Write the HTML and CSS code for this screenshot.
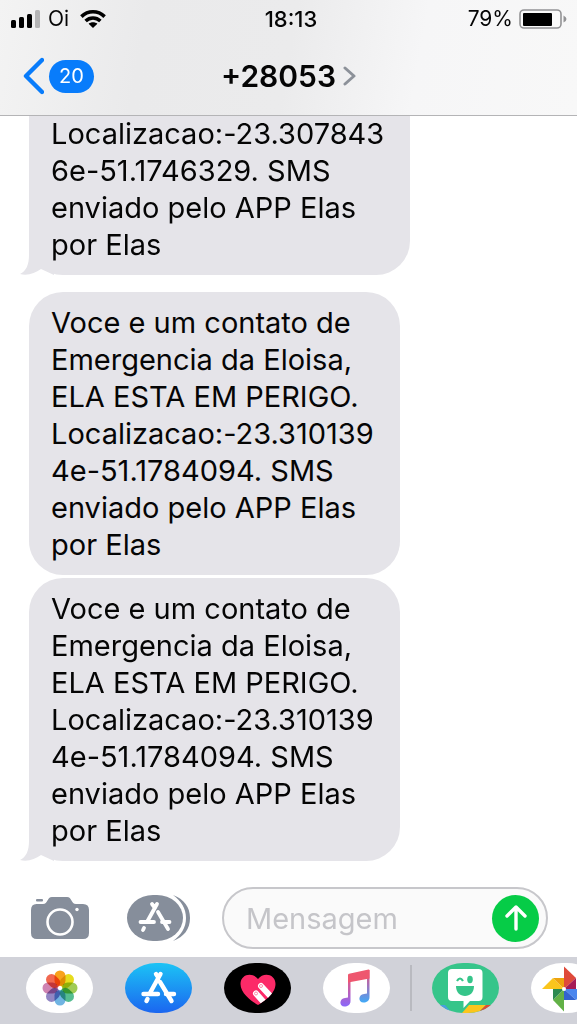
FILE: index.html
```html
<!DOCTYPE html>
<html lang="pt-BR">
<head>
  <meta charset="UTF-8" />
  <meta name="viewport" content="width=device-width, initial-scale=1.0" />
  <title>+28053</title>
  <link rel="stylesheet" href="styles.css">
</head>
<body>
  <div class="phone">
    <header class="top">
      <div class="status">
        <div class="status-left">
          <svg class="signal" width="30" height="18" viewBox="0 0 30 18">
            <rect x="0" y="10" width="5" height="8" rx="1.5"/>
            <rect x="8" y="7" width="5" height="11" rx="1.5"/>
            <rect x="16" y="4" width="5" height="14" rx="1.5"/>
            <rect x="24" y="0" width="5" height="18" rx="1.5" fill="#b5b5b6"/>
          </svg>
          <span>Oi</span>
          <svg class="wifi" width="26" height="18" viewBox="0 0 26 18" fill="none" stroke="#000" stroke-width="3.6">
            <path d="M1.4 6.6 C8 .2 18 .2 24.600 6.600"/>
            <path d="M5.600 11 C10 7 16 7 20.400 11"/>
            <path d="M13 18 L8.600 13.800 C11 11.800 15 11.800 17.400 13.800Z" fill="#000" stroke="none"/>
          </svg>
        </div>
        <time class="clock">18:13</time>
        <div class="status-right">
          <span>79%</span>
          <svg width="48" height="20" viewBox="0 0 48 20">
            <rect x="1" y="1" width="41" height="18" rx="4" fill="#fafafa" stroke="#939395" stroke-width="1.6"/>
            <rect x="4" y="4" width="29" height="13" rx="1"/>
            <path d="M44.500 6.500 Q47.500 8 47.500 10 T44.500 13.500Z" fill="#939395"/>
          </svg>
        </div>
      </div>
      <nav class="nav">
        <a href="#" class="back" aria-label="Voltar">
          <svg width="22" height="38" viewBox="0 0 22 38" fill="none" stroke="#087cfb" stroke-width="4.4" stroke-linecap="round" stroke-linejoin="round">
            <path d="M20 3 L4 19 L20 35"/>
          </svg>
          <span class="badge">20</span>
        </a>
        <a href="#" class="contact">
          <span>+28053</span>
          <svg width="13" height="20" viewBox="0 0 13 20" fill="none" stroke="#8c9199" stroke-width="3" stroke-linecap="round" stroke-linejoin="round">
            <path d="M2 2 L11 10 L2 18"/>
          </svg>
        </a>
      </nav>
    </header>

    <main class="thread">
      <p class="bubble tail scrolled">Localizacao:-23.307843<br>6e-51.1746329. SMS<br>enviado pelo APP Elas<br>por Elas</p>
      <p class="bubble">Voce e um contato de<br>Emergencia da Eloisa,<br>ELA ESTA EM PERIGO.<br>Localizacao:-23.310139<br>4e-51.1784094. SMS<br>enviado pelo APP Elas<br>por Elas</p>
      <p class="bubble tail">Voce e um contato de<br>Emergencia da Eloisa,<br>ELA ESTA EM PERIGO.<br>Localizacao:-23.310139<br>4e-51.1784094. SMS<br>enviado pelo APP Elas<br>por Elas</p>
    </main>

    <form class="composer">
      <button type="button" class="icon-btn" aria-label="Câmera">
        <svg width="58" height="44" viewBox="0 0 58 44">
          <path fill="#868e9b" d="M5.500 8 H12 C17 8 16 1 21 1 H36 C41 1 40 8 45 8 H52 Q58 8 58 14 V37 Q58 43 52 43 H6 Q0 43 0 37 V14 Q0 8 5.500 8Z"/>
          <rect x="5" y="3" width="7" height="2.500" rx="1" fill="#868e9b"/>
          <circle cx="29" cy="26" r="12.500" fill="none" stroke="#fff" stroke-width="2.600"/>
          <circle cx="46" cy="13.500" r="1.700" fill="#fff"/>
        </svg>
      </button>
      <button type="button" class="icon-btn" aria-label="Aplicativos">
        <svg width="63" height="48" viewBox="0 0 63 48">
          <path fill="#868e9b" d="M46 1 C57 5 63 13 63 24 C63 35 57 43 46 47 C54 41 59 34 59 24 C59 14 54 7 46 1Z"/>
          <rect x="0" y="1" width="56" height="46" rx="26" ry="23" fill="#868e9b"/>
          <g fill="none" stroke="#fff" stroke-width="3.800" stroke-linecap="round">
            <path d="M30 10 L20 28 M25 10 L28 14 M31 18 L41 35 M13.500 28 H27 M35 28 H42.500 M17 34 L16 36"/>
          </g>
        </svg>
      </button>
      <div class="field">
        <input type="text" class="message" placeholder="Mensagem" aria-label="Mensagem">
        <button type="submit" class="send" aria-label="Enviar">
          <svg width="24" height="28" viewBox="0 0 24 28" fill="none" stroke="#fff" stroke-width="3.400" stroke-linecap="round" stroke-linejoin="round">
            <path d="M12 25 V3 M3 12 L12 3 L21 12"/>
          </svg>
        </button>
      </div>
    </form>

    <nav class="drawer">
      <a href="#" class="app white" aria-label="Fotos">
        <svg width="67" height="50" viewBox="0 0 67 50">
          <g class="petals" transform="translate(34 25)">
            <rect x="-5.500" y="-17.500" width="11" height="15.500" rx="5.500" fill="#f8a21c"/>
            <rect x="-5.500" y="-17.500" width="11" height="15.500" rx="5.500" fill="#e6dc1e" transform="rotate(45)"/>
            <rect x="-5.500" y="-17.500" width="11" height="15.500" rx="5.500" fill="#a0cb55" transform="rotate(90)"/>
            <rect x="-5.500" y="-17.500" width="11" height="15.500" rx="5.500" fill="#55bd91" transform="rotate(135)"/>
            <rect x="-5.500" y="-17.500" width="11" height="15.500" rx="5.500" fill="#70b4e2" transform="rotate(180)"/>
            <rect x="-5.500" y="-17.500" width="11" height="15.500" rx="5.500" fill="#9286c4" transform="rotate(225)"/>
            <rect x="-5.500" y="-17.500" width="11" height="15.500" rx="5.500" fill="#cf84b2" transform="rotate(270)"/>
            <rect x="-5.500" y="-17.500" width="11" height="15.500" rx="5.500" fill="#f16850" transform="rotate(315)"/>
          </g>
        </svg>
      </a>
      <a href="#" class="app store" aria-label="App Store">
        <svg width="67" height="50" viewBox="0 0 67 50" fill="none" stroke="#fff" stroke-width="4.400" stroke-linecap="round">
          <path d="M35.500 11 L25 30 M31 11 L33 14 M35 19 L46.500 38 M18.500 31 H33 M41 31 H49 M22.500 36 L21.500 38"/>
        </svg>
      </a>
      <a href="#" class="app black" aria-label="Digital Touch">
        <svg width="67" height="50" viewBox="0 0 67 50">
          <clipPath id="heart">
            <path d="M34 42 C29 39 16.500 31 16.500 21 C16.500 11 28.500 8.500 34 16 C39.500 8.500 51.500 11 51.500 21 C51.500 31 39 39 34 42Z"/>
          </clipPath>
          <g clip-path="url(#heart)">
            <rect width="67" height="50" fill="#fc2a68"/>
            <g stroke="#fff" stroke-width="6" stroke-linecap="round">
              <path d="M37 23 L50 37 M32 30.500 L44 44"/>
            </g>
            <g fill="none" stroke="#fc8aa9" stroke-width="1">
              <circle cx="37" cy="23" r="1.500"/>
              <circle cx="32" cy="30.500" r="1.500"/>
            </g>
          </g>
        </svg>
      </a>
      <a href="#" class="app white" aria-label="Música">
        <svg width="67" height="50" viewBox="0 0 67 50">
          <defs>
            <linearGradient id="stemL" x1="0" y1="0" x2="0" y2="1">
              <stop offset="0" stop-color="#f2566f"/>
              <stop offset="1" stop-color="#8a68fa"/>
            </linearGradient>
            <linearGradient id="stemR" x1="0" y1="0" x2="0" y2="1">
              <stop offset="0" stop-color="#f0566e"/>
              <stop offset=".45" stop-color="#a66fb8"/>
              <stop offset="1" stop-color="#3faaf8"/>
            </linearGradient>
          </defs>
          <path fill="url(#stemL)" d="M25 12 H27.500 V38 C27.500 42 24.500 43.500 21.500 43.500 C16 43.500 16 35.500 22 35 L25 34.500Z"/>
          <path fill="url(#stemR)" d="M44 7 H46.500 V34 C46.500 38 43.500 39.500 40.500 39.500 C35 39.500 35 31.500 41 31 L44 30.500Z"/>
          <path fill="#ee576f" d="M25 12 Q25 11 26 10.800 L45.500 6.500 Q46.500 6.400 46.500 7.500 V15.500 L25 19.500Z"/>
        </svg>
      </a>
      <span class="divider"></span>
      <a href="#" class="app bitmoji" aria-label="Bitmoji">
        <svg width="67" height="50" viewBox="0 0 67 50">
          <path fill="#4a9fe0" d="M0 42 H13 L20 50 H0Z"/>
          <path fill="#fcc51c" d="M30 50 L37 42 H54 L46 50Z"/>
          <path fill="#df4a35" d="M46 50 L54 42 H62 V50Z"/>
          <path fill="#fff" d="M20 6 H46.500 Q50.500 6 50.500 10 V34 Q50.500 38 46.500 38 H38 L31.500 45 V38 H20 Q16 38 16 34 V10 Q16 6 20 6Z"/>
          <path d="M25 18 Q28 13 31 18" fill="none" stroke="#36c58a" stroke-width="2.200"/>
          <ellipse cx="38" cy="16.500" rx="2.800" ry="3.700" fill="#36c58a"/>
          <path fill="#36c58a" d="M24 23 H42 C42 29.500 38 33 33 33 S24 29.500 24 23Z"/>
        </svg>
      </a>
      <a href="#" class="app white" aria-label="Google Fotos">
        <svg width="67" height="50" viewBox="0 0 67 50">
          <path fill="#df4a3a" d="M33 26 V3.500 L45 15Z"/>
          <path fill="#a51b55" d="M33 26 L45 15 V26Z"/>
          <path fill="#fac51c" d="M33 26 H11 L22 15Z"/>
          <path fill="#eda30f" d="M33 26 L22 15 H33Z"/>
          <path fill="#62b146" d="M33 26 V48.500 L22 37Z"/>
          <path fill="#2c8a50" d="M33 26 L22 37 V26Z"/>
          <path fill="#4a86ee" d="M33 26 H56 L45 37Z"/>
          <path fill="#3264cf" d="M33 26 L45 37 H33Z"/>
          <circle cx="33" cy="26" r="2" fill="#fff"/>
        </svg>
      </a>
    </nav>
  </div>
</body>
</html>
```

FILE: styles.css
```css
body {
  margin: 0;
  font-family: Inter, "Liberation Sans", sans-serif;
  color: #050505;
  background: #fff;
}

a {
  color: inherit;
  text-decoration: none;
}

button {
  border: none;
  padding: 0;
  background: none;
  cursor: pointer;
}

svg {
  display: block;
  flex: none;
}

.phone {
  display: flex;
  flex-direction: column;
  height: 100vh;
  overflow: hidden;
}

/* status bar and title */
.top {
  flex: none;
  background: linear-gradient(100deg, #f3f3f3 0%, #eaeaeb 25%, #ebebec 50%, #f6f6f7 72%, #f8f8f8 100%);
  border-bottom: 1px solid #b4b4b6;
}

.status {
  display: grid;
  grid-template-columns: 1fr auto 1fr;
  align-items: center;
  height: 37px;
  padding: 0 10px 0 11px;
  font-size: 21px;
}

.status-left,
.status-right {
  display: flex;
  align-items: center;
}

.status-left {
  gap: 7px;
}

.wifi {
  margin-left: 4px;
}

.status-right {
  justify-content: flex-end;
  gap: 6px;
}

.clock {
  font-size: 22px;
  font-weight: 500;
  padding-left: 4px;
}

.nav {
  display: grid;
  grid-template-columns: 1fr auto 1fr;
  align-items: center;
  height: 78px;
  padding: 0 22px;
}

.back {
  display: flex;
  align-items: center;
  gap: 5px;
}

.badge {
  padding: 0 10px;
  border-radius: 17px;
  background: #087cfb;
  color: #fff;
  font-size: 20px;
  line-height: 33px;
}

.contact {
  display: flex;
  align-items: center;
  gap: 7px;
  font-size: 30px;
  font-weight: 600;
}

/* messages, anchored to the bottom */
.thread {
  flex: 1;
  min-height: 0;
  display: flex;
  flex-direction: column;
  justify-content: flex-end;
  align-items: flex-start;
  padding: 0 29px;
  overflow: hidden;
}

.bubble {
  position: relative;
  isolation: isolate;
  flex: none;
  margin: 0 0 3px;
  padding: 12px 26px 12px 22px;
  border-radius: 34px;
  background: #e5e4e9;
  font-size: 29px;
  line-height: 37px;
}

.tail {
  margin-bottom: 17px;
}

.tail:last-child {
  margin-bottom: 0;
}

.tail::before {
  content: "";
  position: absolute;
  z-index: -1;
  left: -9px;
  bottom: 0;
  width: 34px;
  height: 36px;
  background: #e5e4e9;
  clip-path: path("M9 0 V16 C9 26 6 32 0 35 C8 37 15 34 21 30 L34 36 V0 Z");
}

/* runs on under the header */
.scrolled {
  padding-top: 48px;
}

/* text entry */
.composer {
  flex: none;
  display: flex;
  align-items: center;
  margin: 0;
  padding: 26px 29px 8px 31px;
}

.icon-btn {
  margin-right: 38px;
}

.icon-btn + .icon-btn {
  margin-right: 32px;
}

.field {
  flex: 1;
  min-width: 0;
  display: flex;
  align-items: center;
  box-sizing: border-box;
  height: 62px;
  padding: 0 7px 0 22px;
  border: 2px solid #c7c7cb;
  border-radius: 31px;
  background: #fafafa;
}

.message {
  flex: 1;
  min-width: 0;
  padding: 0;
  border: none;
  outline: none;
  background: none;
  font: inherit;
  font-size: 29px;
}

.message::placeholder {
  color: #c5c5c9;
  opacity: 1;
}

.send {
  display: flex;
  align-items: center;
  justify-content: center;
  width: 47px;
  height: 47px;
  border-radius: 50%;
  background: #06cc47;
}

/* app drawer */
.drawer {
  flex: none;
  display: flex;
  align-items: center;
  gap: 32px;
  padding: 6px 0 11px 26px;
  background: #d1d2d9;
  overflow: hidden;
}

.app {
  flex: none;
  border-radius: 31px / 25px;
  overflow: hidden;
}

.white {
  background: #fff;
}

.black {
  background: #000;
}

.store {
  background: linear-gradient(#1cc3f5, #1b66f0);
}

.bitmoji {
  background: #36c58a;
}

.petals rect {
  mix-blend-mode: multiply;
}

.divider {
  flex: none;
  width: 2px;
  height: 46px;
  margin: 0 -12px;
  background: #b9bac0;
}
```
